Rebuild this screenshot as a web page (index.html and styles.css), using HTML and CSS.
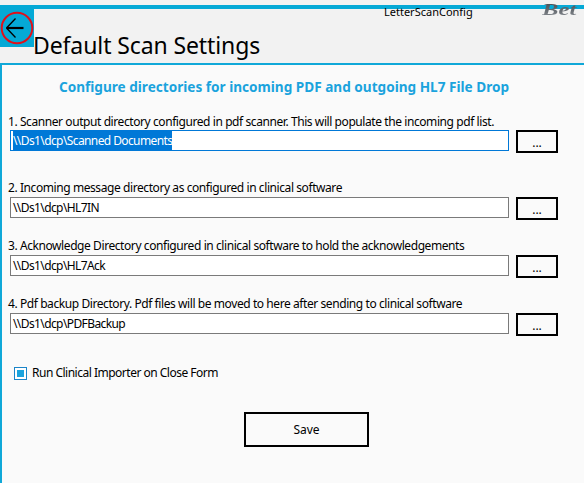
FILE: index.html
```html
<!DOCTYPE html>
<html>
<head>
<meta charset="utf-8">
<link rel="stylesheet" href="styles.css">
</head>
<body>
<div class="window">
  <header class="header">
    <div class="topbar"></div>
    <div class="caption">LetterScanConfig</div>
    <div class="logo">Bet</div>
    <button class="back" aria-label="Back">
      <svg width="34" height="42" viewBox="0 0 34 42">
        <circle cx="17" cy="23" r="15.3" fill="none" stroke="#e0101a" stroke-width="2"/>
        <path d="M6.5 23 H23.5" stroke="#000" stroke-width="2.2"/>
        <path d="M6.5 23 L15.5 13.5 M6.5 23 L15.5 32.5" stroke="#000" stroke-width="1.3" fill="none"/>
      </svg>
    </button>
    <h1 class="title">Default Scan Settings</h1>
  </header>
  <main class="content">
    <h2 class="subtitle">Configure directories for incoming PDF and outgoing HL7 File Drop</h2>
    <div class="field f1">
      <label class="label">1. Scanner output directory configured in pdf scanner. This will populate the incoming pdf list.</label>
      <div class="row">
        <div class="input focused"><span class="sel">\\Ds1\dcp\Scanned Documents</span></div>
        <button class="browse">...</button>
      </div>
    </div>
    <div class="field f2">
      <label class="label">2. Incoming message directory as configured in clinical software</label>
      <div class="row">
        <div class="input">\\Ds1\dcp\HL7IN</div>
        <button class="browse">...</button>
      </div>
    </div>
    <div class="field">
      <label class="label">3. Acknowledge Directory configured in clinical software to hold the acknowledgements</label>
      <div class="row">
        <div class="input">\\Ds1\dcp\HL7Ack</div>
        <button class="browse">...</button>
      </div>
    </div>
    <div class="field">
      <label class="label">4. Pdf backup Directory. Pdf files will be moved to here after sending to clinical software</label>
      <div class="row">
        <div class="input">\\Ds1\dcp\PDFBackup</div>
        <button class="browse">...</button>
      </div>
    </div>
    <div class="check">
      <span class="box"><span class="tick"></span></span>
      <span class="check-text">Run Clinical Importer on Close Form</span>
    </div>
    <div class="actions">
      <button class="save">Save</button>
    </div>
  </main>
</div>
</body>
</html>
```
FILE: styles.css
```css
* { box-sizing: border-box; }
html, body { margin: 0; padding: 0; }
body {
  width: 584px;
  height: 483px;
  overflow: hidden;
  background: #fafafa;
  font-family: "Noto Sans", "Open Sans", sans-serif;
  color: #000;
}
.window { width: 584px; height: 483px; display: flex; flex-direction: column; }
.header {
  position: relative;
  height: 65px;
  background: #f2f2f2;
  padding-top: 5px;
  border-bottom: 2px solid #10a8d8;
  flex: none;
}
.topbar { height: 4px; background: #05a9d6; }
.caption {
  position: absolute;
  left: 384px;
  top: 5px;
  font-size: 11px;
  line-height: 14px;
}
.logo {
  position: absolute;
  left: 542px;
  top: 1px;
  font-family: "Liberation Serif", serif;
  font-weight: bold;
  font-style: italic;
  font-size: 17px;
  line-height: 18px;
  transform: scaleX(1.45);
  transform-origin: left top;
  background: linear-gradient(#3f444a, #8c9197);
  -webkit-background-clip: text;
  background-clip: text;
  color: transparent;
}
.back {
  position: absolute;
  left: 0;
  top: 5px;
  width: 34px;
  height: 42px;
  padding: 0;
  border: 0;
  background: #05a9d6;
  display: block;
}
.back svg { display: block; }
.title {
  margin: 0;
  padding: 21px 0 0 33px;
  font-weight: normal;
  font-size: 23px;
  line-height: 30px;
  letter-spacing: -0.1px;
}
.content {
  flex: 1;
  border-left: 2px solid #10a8d8;
  padding: 13px 0 0 6px;
}
.subtitle {
  margin: 0 0 0 50px;
  width: 452px;
  text-align: center;
  color: #1aa3dd;
  font-size: 13.6px;
  font-weight: bold;
  line-height: 18px;
  white-space: nowrap;
}
.field { margin-top: 18px; }
.field.f2 { margin-top: 27px; }
.label {
  display: block;
  font-size: 12px;
  line-height: 16px;
  letter-spacing: -0.42px;
  white-space: nowrap;
}
.row {
  display: flex;
  gap: 7px;
  margin-top: 1px;
  padding-left: 2px;
}
.f1 .row { margin-top: 0; }
.input {
  width: 499px;
  height: 21px;
  border: 1px solid #7a7a7a;
  background: #fff;
  font-size: 12px;
  letter-spacing: -0.6px;
  line-height: 19px;
  padding-left: 2px;
  white-space: nowrap;
}
.input.focused { border-color: #0078d7; }
.sel { background: #0078d7; color: #fff; padding: 1px 0; }
.browse {
  width: 42px;
  height: 23px;
  border: 2px solid #000;
  background: #fafafa;
  font-family: inherit;
  font-size: 12px;
  padding: 2px 0 0;
  color: #000;
}
.check {
  display: flex;
  align-items: center;
  gap: 5px;
  margin: 29px 0 0 6px;
}
.box {
  width: 13px;
  height: 13px;
  border: 1px solid #1b85c9;
  background: #fff;
  padding: 2px;
  display: block;
}
.tick { display: block; width: 7px; height: 7px; background: #1aa3dd; }
.check-text { font-size: 12px; line-height: 16px; letter-spacing: -0.5px; }
.actions { display: flex; margin: 31px 0 0 236px; }
.save {
  width: 125px;
  height: 35px;
  border: 2px solid #000;
  background: #fafafa;
  font-family: inherit;
  font-size: 12px;
  color: #000;
}
```
